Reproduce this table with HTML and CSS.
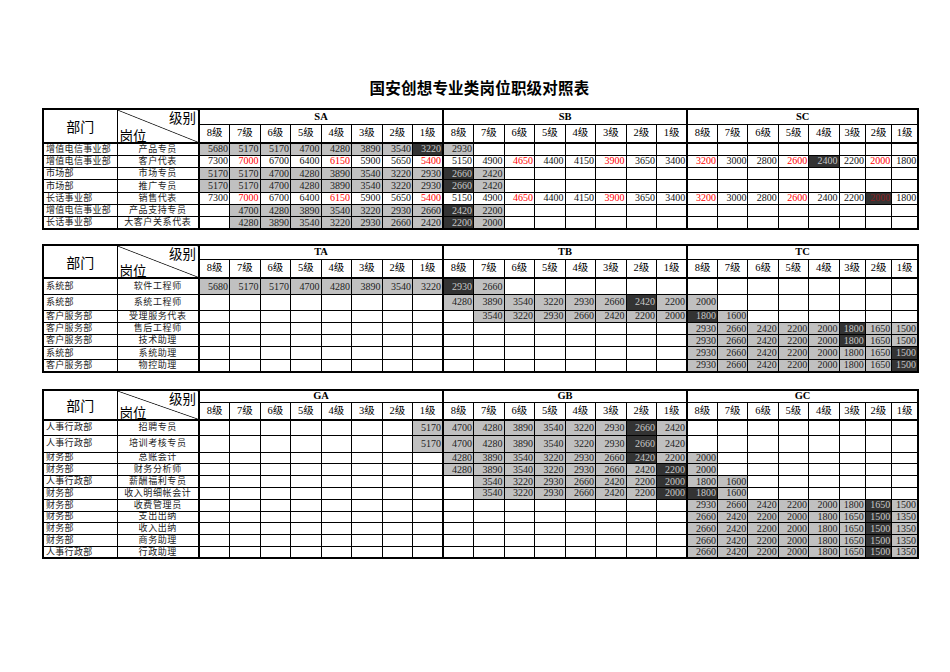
FILE: index.html
```html
<!DOCTYPE html>
<html lang="zh-CN">
<head>
<meta charset="utf-8">
<title>国安创想专业类岗位职级对照表</title>
<link rel="stylesheet" href="styles.css">
</head>
<body>
<div class="page">
<div class="title">国安创想专业类岗位职级对照表</div>

<table class="sheet s1">
<colgroup><col class="cdp"><col class="cps"><col class="cw gs"><col class="cw"><col class="cw"><col class="cw"><col class="cw"><col class="cw"><col class="cw"><col class="cw"><col class="cw gs"><col class="cw"><col class="cw"><col class="cw"><col class="cw"><col class="cw"><col class="cw"><col class="cw"><col class="cx gs"><col class="cx"><col class="cx"><col class="cx"><col class="cx"><col class="cn"><col class="cn"><col class="cn"></colgroup>
<tr class="hA"><th class="hd" rowspan="2">部门</th><th class="dg" rowspan="2"><div class="dgb"><span class="jb">级别</span><span class="gw">岗位</span></div></th><th class="grp" colspan="8">SA</th><th class="grp" colspan="8">SB</th><th class="grp" colspan="8">SC</th></tr>
<tr class="hB"><th>8级</th><th>7级</th><th>6级</th><th>5级</th><th>4级</th><th>3级</th><th>2级</th><th>1级</th><th>8级</th><th>7级</th><th>6级</th><th>5级</th><th>4级</th><th>3级</th><th>2级</th><th>1级</th><th>8级</th><th>7级</th><th>6级</th><th>5级</th><th>4级</th><th>3级</th><th>2级</th><th>1级</th></tr>
<tr class="r"><td class="dp">增值电信事业部</td><td class="ps">产品专员</td><td class="g">5680</td><td class="g">5170</td><td class="g">5170</td><td class="g">4700</td><td class="g">4280</td><td class="g">3890</td><td class="g">3540</td><td class="d">3220</td><td class="g">2930</td><td></td><td></td><td></td><td></td><td></td><td></td><td></td><td></td><td></td><td></td><td></td><td></td><td></td><td></td><td></td></tr>
<tr class="r"><td class="dp">增值电信事业部</td><td class="ps">客户代表</td><td>7300</td><td class="rd">7000</td><td>6700</td><td>6400</td><td class="rd">6150</td><td>5900</td><td>5650</td><td class="rd">5400</td><td>5150</td><td>4900</td><td class="rd">4650</td><td>4400</td><td>4150</td><td class="rd">3900</td><td>3650</td><td>3400</td><td class="rd">3200</td><td>3000</td><td>2800</td><td class="rd">2600</td><td class="d">2400</td><td>2200</td><td class="rd">2000</td><td>1800</td></tr>
<tr class="r"><td class="dp">市场部</td><td class="ps">市场专员</td><td class="g">5170</td><td class="g">5170</td><td class="g">4700</td><td class="g">4280</td><td class="g">3890</td><td class="g">3540</td><td class="g">3220</td><td class="g">2930</td><td class="d">2660</td><td class="g">2420</td><td></td><td></td><td></td><td></td><td></td><td></td><td></td><td></td><td></td><td></td><td></td><td></td><td></td><td></td></tr>
<tr class="r"><td class="dp">市场部</td><td class="ps">推广专员</td><td class="g">5170</td><td class="g">5170</td><td class="g">4700</td><td class="g">4280</td><td class="g">3890</td><td class="g">3540</td><td class="g">3220</td><td class="g">2930</td><td class="d">2660</td><td class="g">2420</td><td></td><td></td><td></td><td></td><td></td><td></td><td></td><td></td><td></td><td></td><td></td><td></td><td></td><td></td></tr>
<tr class="r"><td class="dp">长话事业部</td><td class="ps">销售代表</td><td>7300</td><td class="rd">7000</td><td>6700</td><td>6400</td><td class="rd">6150</td><td>5900</td><td>5650</td><td class="rd">5400</td><td>5150</td><td>4900</td><td class="rd">4650</td><td>4400</td><td>4150</td><td class="rd">3900</td><td>3650</td><td>3400</td><td class="rd">3200</td><td>3000</td><td>2800</td><td class="rd">2600</td><td>2400</td><td>2200</td><td class="d dr">2000</td><td>1800</td></tr>
<tr class="r"><td class="dp">增值电信事业部</td><td class="ps">产品支持专员</td><td></td><td class="g">4700</td><td class="g">4280</td><td class="g">3890</td><td class="g">3540</td><td class="g">3220</td><td class="g">2930</td><td class="g">2660</td><td class="d">2420</td><td class="g">2200</td><td></td><td></td><td></td><td></td><td></td><td></td><td></td><td></td><td></td><td></td><td></td><td></td><td></td><td></td></tr>
<tr class="r"><td class="dp">长话事业部</td><td class="ps">大客户关系代表</td><td></td><td class="g">4280</td><td class="g">3890</td><td class="g">3540</td><td class="g">3220</td><td class="g">2930</td><td class="g">2660</td><td class="g">2420</td><td class="d">2200</td><td class="g">2000</td><td></td><td></td><td></td><td></td><td></td><td></td><td></td><td></td><td></td><td></td><td></td><td></td><td></td><td></td></tr>
</table>

<table class="sheet s2">
<colgroup><col class="cdp"><col class="cps"><col class="cw gs"><col class="cw"><col class="cw"><col class="cw"><col class="cw"><col class="cw"><col class="cw"><col class="cw"><col class="cw gs"><col class="cw"><col class="cw"><col class="cw"><col class="cw"><col class="cw"><col class="cw"><col class="cw"><col class="cx gs"><col class="cx"><col class="cx"><col class="cx"><col class="cx"><col class="cn"><col class="cn"><col class="cn"></colgroup>
<tr class="hA"><th class="hd" rowspan="2">部门</th><th class="dg" rowspan="2"><div class="dgb"><span class="jb">级别</span><span class="gw">岗位</span></div></th><th class="grp" colspan="8">TA</th><th class="grp" colspan="8">TB</th><th class="grp" colspan="8">TC</th></tr>
<tr class="hB"><th>8级</th><th>7级</th><th>6级</th><th>5级</th><th>4级</th><th>3级</th><th>2级</th><th>1级</th><th>8级</th><th>7级</th><th>6级</th><th>5级</th><th>4级</th><th>3级</th><th>2级</th><th>1级</th><th>8级</th><th>7级</th><th>6级</th><th>5级</th><th>4级</th><th>3级</th><th>2级</th><th>1级</th></tr>
<tr class="rt1"><td class="dp">系统部</td><td class="ps">软件工程师</td><td class="g">5680</td><td class="g">5170</td><td class="g">5170</td><td class="g">4700</td><td class="g">4280</td><td class="g">3890</td><td class="g">3540</td><td class="g">3220</td><td class="d">2930</td><td class="g">2660</td><td></td><td></td><td></td><td></td><td></td><td></td><td></td><td></td><td></td><td></td><td></td><td></td><td></td><td></td></tr>
<tr class="rt2"><td class="dp">系统部</td><td class="ps">系统工程师</td><td></td><td></td><td></td><td></td><td></td><td></td><td></td><td></td><td class="g">4280</td><td class="g">3890</td><td class="g">3540</td><td class="g">3220</td><td class="g">2930</td><td class="g">2660</td><td class="d">2420</td><td class="g">2200</td><td class="g">2000</td><td></td><td></td><td></td><td></td><td></td><td></td><td></td></tr>
<tr class="r"><td class="dp">客户服务部</td><td class="ps">受理服务代表</td><td></td><td></td><td></td><td></td><td></td><td></td><td></td><td></td><td></td><td class="g">3540</td><td class="g">3220</td><td class="g">2930</td><td class="g">2660</td><td class="g">2420</td><td class="g">2200</td><td class="g">2000</td><td class="d">1800</td><td class="g">1600</td><td></td><td></td><td></td><td></td><td></td><td></td></tr>
<tr class="r"><td class="dp">客户服务部</td><td class="ps">售后工程师</td><td></td><td></td><td></td><td></td><td></td><td></td><td></td><td></td><td></td><td></td><td></td><td></td><td></td><td></td><td></td><td></td><td class="g">2930</td><td class="g">2660</td><td class="g">2420</td><td class="g">2200</td><td class="g">2000</td><td class="d">1800</td><td class="g">1650</td><td class="g">1500</td></tr>
<tr class="r"><td class="dp">客户服务部</td><td class="ps">技术助理</td><td></td><td></td><td></td><td></td><td></td><td></td><td></td><td></td><td></td><td></td><td></td><td></td><td></td><td></td><td></td><td></td><td class="g">2930</td><td class="g">2660</td><td class="g">2420</td><td class="g">2200</td><td class="g">2000</td><td class="d">1800</td><td class="g">1650</td><td class="g">1500</td></tr>
<tr class="r"><td class="dp">系统部</td><td class="ps">系统助理</td><td></td><td></td><td></td><td></td><td></td><td></td><td></td><td></td><td></td><td></td><td></td><td></td><td></td><td></td><td></td><td></td><td class="g">2930</td><td class="g">2660</td><td class="g">2420</td><td class="g">2200</td><td class="g">2000</td><td class="g">1800</td><td class="g">1650</td><td class="d">1500</td></tr>
<tr class="r"><td class="dp">客户服务部</td><td class="ps">物控助理</td><td></td><td></td><td></td><td></td><td></td><td></td><td></td><td></td><td></td><td></td><td></td><td></td><td></td><td></td><td></td><td></td><td class="g">2930</td><td class="g">2660</td><td class="g">2420</td><td class="g">2200</td><td class="g">2000</td><td class="g">1800</td><td class="g">1650</td><td class="d">1500</td></tr>
</table>

<table class="sheet s3">
<colgroup><col class="cdp"><col class="cps"><col class="cw gs"><col class="cw"><col class="cw"><col class="cw"><col class="cw"><col class="cw"><col class="cw"><col class="cw"><col class="cw gs"><col class="cw"><col class="cw"><col class="cw"><col class="cw"><col class="cw"><col class="cw"><col class="cw"><col class="cx gs"><col class="cx"><col class="cx"><col class="cx"><col class="cx"><col class="cn"><col class="cn"><col class="cn"></colgroup>
<tr class="hA"><th class="hd" rowspan="2">部门</th><th class="dg" rowspan="2"><div class="dgb"><span class="jb">级别</span><span class="gw">岗位</span></div></th><th class="grp" colspan="8">GA</th><th class="grp" colspan="8">GB</th><th class="grp" colspan="8">GC</th></tr>
<tr class="hB"><th>8级</th><th>7级</th><th>6级</th><th>5级</th><th>4级</th><th>3级</th><th>2级</th><th>1级</th><th>8级</th><th>7级</th><th>6级</th><th>5级</th><th>4级</th><th>3级</th><th>2级</th><th>1级</th><th>8级</th><th>7级</th><th>6级</th><th>5级</th><th>4级</th><th>3级</th><th>2级</th><th>1级</th></tr>
<tr class="rg1"><td class="dp">人事行政部</td><td class="ps">招聘专员</td><td></td><td></td><td></td><td></td><td></td><td></td><td></td><td class="g">5170</td><td class="g">4700</td><td class="g">4280</td><td class="g">3890</td><td class="g">3540</td><td class="g">3220</td><td class="g">2930</td><td class="d">2660</td><td class="g">2420</td><td></td><td></td><td></td><td></td><td></td><td></td><td></td><td></td></tr>
<tr class="rg2"><td class="dp">人事行政部</td><td class="ps">培训考核专员</td><td></td><td></td><td></td><td></td><td></td><td></td><td></td><td class="g">5170</td><td class="g">4700</td><td class="g">4280</td><td class="g">3890</td><td class="g">3540</td><td class="g">3220</td><td class="g">2930</td><td class="d">2660</td><td class="g">2420</td><td></td><td></td><td></td><td></td><td></td><td></td><td></td><td></td></tr>
<tr class="rs"><td class="dp">财务部</td><td class="ps">总账会计</td><td></td><td></td><td></td><td></td><td></td><td></td><td></td><td></td><td class="g">4280</td><td class="g">3890</td><td class="g">3540</td><td class="g">3220</td><td class="g">2930</td><td class="g">2660</td><td class="d">2420</td><td class="g">2200</td><td class="g">2000</td><td></td><td></td><td></td><td></td><td></td><td></td><td></td></tr>
<tr class="rs"><td class="dp">财务部</td><td class="ps">财务分析师</td><td></td><td></td><td></td><td></td><td></td><td></td><td></td><td></td><td class="g">4280</td><td class="g">3890</td><td class="g">3540</td><td class="g">3220</td><td class="g">2930</td><td class="g">2660</td><td class="g">2420</td><td class="d">2200</td><td class="g">2000</td><td></td><td></td><td></td><td></td><td></td><td></td><td></td></tr>
<tr class="rs"><td class="dp">人事行政部</td><td class="ps">薪酬福利专员</td><td></td><td></td><td></td><td></td><td></td><td></td><td></td><td></td><td></td><td class="g">3540</td><td class="g">3220</td><td class="g">2930</td><td class="g">2660</td><td class="g">2420</td><td class="g">2200</td><td class="d">2000</td><td class="g">1800</td><td class="g">1600</td><td></td><td></td><td></td><td></td><td></td><td></td></tr>
<tr class="rs"><td class="dp">财务部</td><td class="ps">收入明细帐会计</td><td></td><td></td><td></td><td></td><td></td><td></td><td></td><td></td><td></td><td class="g">3540</td><td class="g">3220</td><td class="g">2930</td><td class="g">2660</td><td class="g">2420</td><td class="g">2200</td><td class="d">2000</td><td class="d">1800</td><td class="g">1600</td><td></td><td></td><td></td><td></td><td></td><td></td></tr>
<tr class="rs"><td class="dp">财务部</td><td class="ps">收费管理员</td><td></td><td></td><td></td><td></td><td></td><td></td><td></td><td></td><td></td><td></td><td></td><td></td><td></td><td></td><td></td><td></td><td class="g">2930</td><td class="g">2660</td><td class="g">2420</td><td class="g">2200</td><td class="g">2000</td><td class="g">1800</td><td class="d">1650</td><td class="g">1500</td></tr>
<tr class="rs"><td class="dp">财务部</td><td class="ps">支出出纳</td><td></td><td></td><td></td><td></td><td></td><td></td><td></td><td></td><td></td><td></td><td></td><td></td><td></td><td></td><td></td><td></td><td class="g">2660</td><td class="g">2420</td><td class="g">2200</td><td class="g">2000</td><td class="g">1800</td><td class="g">1650</td><td class="d">1500</td><td class="g">1350</td></tr>
<tr class="rs"><td class="dp">财务部</td><td class="ps">收入出纳</td><td></td><td></td><td></td><td></td><td></td><td></td><td></td><td></td><td></td><td></td><td></td><td></td><td></td><td></td><td></td><td></td><td class="g">2660</td><td class="g">2420</td><td class="g">2200</td><td class="g">2000</td><td class="g">1800</td><td class="g">1650</td><td class="d">1500</td><td class="g">1350</td></tr>
<tr class="rs"><td class="dp">财务部</td><td class="ps">商务助理</td><td></td><td></td><td></td><td></td><td></td><td></td><td></td><td></td><td></td><td></td><td></td><td></td><td></td><td></td><td></td><td></td><td class="g">2660</td><td class="g">2420</td><td class="g">2200</td><td class="g">2000</td><td class="g">1800</td><td class="g">1650</td><td class="d">1500</td><td class="g">1350</td></tr>
<tr class="rs"><td class="dp">人事行政部</td><td class="ps">行政助理</td><td></td><td></td><td></td><td></td><td></td><td></td><td></td><td></td><td></td><td></td><td></td><td></td><td></td><td></td><td></td><td></td><td class="g">2660</td><td class="g">2420</td><td class="g">2200</td><td class="g">2000</td><td class="g">1800</td><td class="g">1650</td><td class="d">1500</td><td class="g">1350</td></tr>
</table>
</div>
</body>
</html>
```
FILE: styles.css
```css
* { box-sizing: border-box; }
body {
  margin: 0;
  background: #fff;
  color: #000;
  font-family: "Liberation Serif", "Noto Sans CJK SC", serif;
}
.page { padding: 77px 0 0 42px; width: 950px; }
.title {
  width: 875px;
  height: 20px;
  line-height: 20px;
  margin: 0 0 11px;
  text-align: center;
  font-family: "Noto Sans CJK SC", sans-serif;
  font-weight: 700;
  font-size: 15.5px;
  letter-spacing: 0.2px;
}
.sheet {
  border-collapse: collapse;
  table-layout: fixed;
  width: 875px;
  border: 2px solid #000;
}
.s1 { margin-bottom: 14px; }
.s2 { margin-bottom: 16px; }
.cdp { width: 74px; }
.cps { width: 82px; border-right: 2px solid #000; }
.cw { width: 30.5px; }
.cx { width: 30.4px; }
.cn { width: 26.33px; }
.gs { border-left: 2px solid #000; }

.sheet td, .sheet th {
  border: 1px solid #000;
  padding: 0;
  font-weight: normal;
  line-height: 1;
  overflow: hidden;
  white-space: nowrap;
  vertical-align: middle;
}
.sheet td {
  font-size: 10px;
  text-align: right;
  padding-right: 1px;
  color: #111;
}
.sheet td.dp {
  text-align: left;
  padding-left: 2px;
  font-size: 9px;
  letter-spacing: 0.3px;
  color: #222;
}
.sheet td.ps {
  text-align: center;
  padding-right: 0;
  font-size: 9px;
  letter-spacing: 0.6px;
  color: #222;
}
.sheet td.g { background: #c0c0c0; color: #222; }
.sheet td.d { background: #333; color: #c8c8c8; }
.sheet td.rd { color: #f00; }
.sheet td.dr { color: #8a2020; }

.hA { height: 15px; }
.hB { height: 19px; }
.s2 .hA { height: 14px; }
.s3 .hA { height: 13px; }
.s3 .hB { height: 17px; }
.hB th {
  border-bottom: 2px solid #000;
  font-size: 10.5px;
  text-align: center;
}
.grp {
  font-weight: 700 !important;
  font-size: 10.5px;
  text-align: center;
  vertical-align: middle;
}
.hd {
  font-size: 14px;
  text-align: center;
  border-bottom: 2px solid #000 !important;
  font-family: "Noto Sans CJK SC", serif;
}
.sheet th.dg {
  overflow: visible;
  border-bottom: 2px solid #000;
  background: linear-gradient(to top right, transparent calc(50% - 0.7px), #000 50%, transparent calc(50% + 0.7px));
}
.dgb {
  display: flex;
  flex-direction: column;
  justify-content: space-between;
  height: 32px;
  padding: 0 2px;
  font-family: "Noto Sans CJK SC", serif;
  font-size: 13.5px;
  line-height: 14px;
}
.s2 .dgb { height: 31px; }
.s3 .dgb { height: 28px; }
.jb { align-self: flex-end; }
.gw { align-self: flex-start; }

.r { height: 12.3px; }
.rt1 { height: 16.5px; }
.rt2 { height: 15.5px; }
.rg1 { height: 16px; }
.rg2 { height: 16.5px; }
.rs { height: 11.8px; }
```
